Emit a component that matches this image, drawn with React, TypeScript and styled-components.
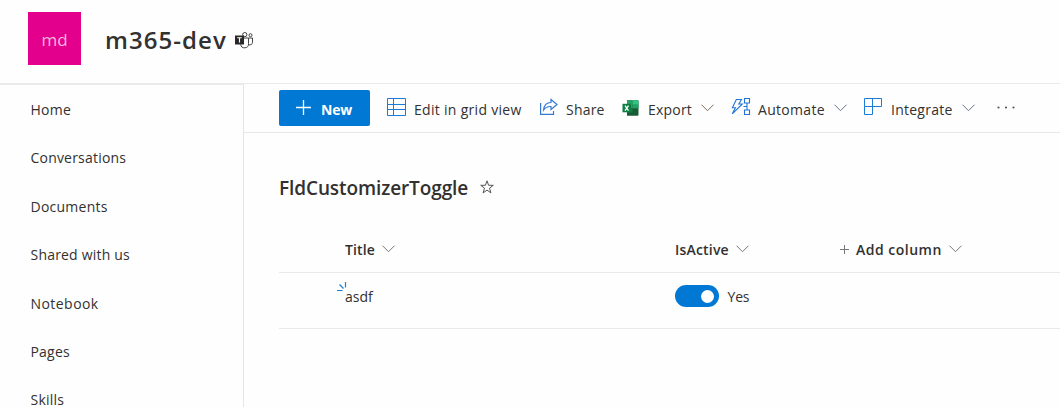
import React from "react";
import styled, { createGlobalStyle } from "styled-components";

const GlobalStyle = createGlobalStyle`
  * { box-sizing: border-box; }
  body { margin: 0; background: #fefefe; color: #323130; overflow: hidden;
    font-family: "Open Sans", "Noto Sans", sans-serif; font-size: 14px; }
  svg { display: block; flex: none; overflow: visible; }
`;

const Page = styled.div`
  height: 407px;
  display: flex;
  flex-direction: column;
  overflow: hidden;
`;
const Header = styled.header`
  height: 83px;
  flex: none;
  display: flex;
  align-items: flex-start;
  padding: 12px 28px;
`;
const Logo = styled.div`
  width: 53px;
  height: 53px;
  background: #e3008c;
  color: #f6b5dc;
  font-size: 17px;
  line-height: 56px;
  text-align: center;
`;
const Text = styled.span<{ $track?: number; $weight?: number; $size?: number }>`
  white-space: nowrap;
  line-height: 20px;
  font-size: ${(p) => p.$size ?? 14}px;
  font-weight: ${(p) => p.$weight ?? 400};
  letter-spacing: ${(p) => p.$track ?? 0}px;
`;
const SiteName = styled.h1`
  margin: 11px 8px 0 24px;
  font-size: 24px;
  line-height: 34px;
  font-weight: 600;
  letter-spacing: 1.05px;
  white-space: nowrap;
`;
const TeamsMark = styled.div`
  margin-top: 20px;
`;
const Body = styled.div`
  flex: 1;
  display: flex;
  min-height: 0;
`;
const SideNav = styled.nav`
  width: 244px;
  flex: none;
  border-top: 2px solid #eaeaea;
  border-right: 1px solid #e6e6e6;
  padding: 0.8px 30px 0 30.5px;
`;
const NavItem = styled.a`
  display: flex;
  align-items: center;
  height: 48.4px;
`;
const Main = styled.main`
  flex: 1;
  min-width: 0;
  border-top: 1px solid #eaeaea;
`;
const Toolbar = styled.div`
  height: 49px;
  border-bottom: 1px solid #e8e8e8;
  display: flex;
  align-items: flex-start;
  padding: 6px 0 0 35px;
`;
const NewButton = styled.button`
  width: 91px;
  height: 36px;
  border: 0;
  border-radius: 2px;
  background: #0078d4;
  color: #fff;
  display: flex;
  align-items: center;
  padding: 3px 0 0 17px;
  gap: 10px;
  font-family: inherit;
  svg { margin-top: -5px; }
`;
const Command = styled.div<{ $width: number; $gap: number; $before: number }>`
  width: ${(p) => p.$width}px;
  margin-left: ${(p) => p.$before}px;
  height: 36px;
  display: flex;
  align-items: center;
  gap: ${(p) => p.$gap}px;
  padding-top: 3px;
  svg { margin-top: -5px; }
  svg:last-child:not(:first-child) { margin: -3px 0 0 auto; }
`;
const ListTitle = styled.div`
  display: flex;
  align-items: center;
  gap: 12px;
  height: 94px;
  padding: 16px 0 0 35px;
  svg { margin-top: -2px; }
`;
const Row = styled.div<{ $height: number }>`
  display: grid;
  grid-template-columns: 330px 165px 1fr;
  align-items: center;
  height: ${(p) => p.$height}px;
  margin-left: 35px;
  padding-left: 66px;
  border-bottom: 1px solid #e9e9e9;
`;
const Cell = styled.div<{ $gap?: number; $shift?: number }>`
  position: relative;
  display: flex;
  align-items: center;
  gap: ${(p) => p.$gap ?? 7}px;
  margin-top: ${(p) => p.$shift ?? 0}px;
  > svg:last-child { margin-top: -2px; }
`;
const NewMark = styled.div`
  position: absolute;
  left: -8px;
  top: -5px;
`;
const Toggle = styled.div`
  width: 44px;
  height: 22px;
  border-radius: 11px;
  background: #0078d4;
  display: flex;
  align-items: center;
  justify-content: flex-end;
  padding: 1px 5px 0 0;
`;
const Knob = styled.div`
  width: 13px;
  height: 13px;
  border-radius: 50%;
  background: #fff;
`;
const ToggleLabel = styled(Text)`
  padding-top: 2px;
`;

const Chevron = ({ color = "#777" }: { color?: string }) => (
  <svg width="13" height="8" viewBox="0 0 13 8" fill="none" stroke={color}>
    <path d="M.5 .7 6.5 6.7 12.5 .7" />
  </svg>
);
const Plus = ({ size, color, stroke = 1 }: { size: number; color: string; stroke?: number }) => (
  <svg width={size} height={size} viewBox={`0 0 ${size} ${size}`} stroke={color} strokeWidth={stroke}>
    <path d={`M0 ${size / 2}H${size}M${size / 2} 0V${size}`} />
  </svg>
);
const TeamsIcon = () => (
  <svg width="19" height="17" viewBox="0 0 19 17" fill="none" stroke="#444">
    <circle cx="9.8" cy="2.6" r="2.1" />
    <circle cx="15.5" cy="3.2" r="1.5" />
    <path d="M9 6h4.5v5.5a3.9 3.9 0 0 1-7.8 .8M13.5 6h4v4.3a2.6 2.6 0 0 1-4 2.2" />
    <path d="M0 3.5h9v9H0z" fill="#292827" stroke="none" />
    <path d="M2.2 5.8h4.6M4.5 5.8v4.8" stroke="#fff" strokeWidth="1.1" />
  </svg>
);
const GridIcon = () => (
  <svg width="19" height="18" viewBox="0 0 19 18" fill="none" stroke="#1c7cd5">
    <path d="M.5 .5h18v17H.5zM.5 6.5h18M.5 11.5h18M6.5 .5v17" />
  </svg>
);
const ShareIcon = () => (
  <svg width="18" height="16" viewBox="0 0 18 16" fill="none" stroke="#3478d4" strokeWidth="1.2">
    <path d="M.6 4v11.4h12.9v-3.4M11 .5l6 5-6 5V7.5C7.5 7.3 5.3 8.6 3.6 11 4 6.5 6.8 3.600 11 3.5z" />
  </svg>
);
const ExcelIcon = () => (
  <svg width="17" height="18" viewBox="0 0 17 18">
    <g transform="translate(.5 2.3)">
      <path d="M4.5 0H15a1 1 0 0 1 1 1v13.5a1 1 0 0 1-1 1H4.5z" fill="#185c37" />
      <path d="M4.5 0H10v8H4.5z" fill="#21a366" />
      <path d="M10 0h5a1 1 0 0 1 1 1v3.5h-6z" fill="#33c481" />
      <path d="M10 4.5h6V8h-6z" fill="#21a366" />
      <path d="M4.5 8H10v4H4.5z" fill="#107c41" />
      <path d="M0 3.5h8.5v8.5H0z" fill="#107c41" />
      <path d="m2.5 5.3 3.5 5M6 5.3l-3.5 5" stroke="#fff" strokeWidth="1.3" />
    </g>
  </svg>
);
const AutomateIcon = () => (
  <svg width="18" height="18" viewBox="0 0 18 18" fill="none" stroke="#2375d5" strokeWidth="1.1">
    <path d="M4.3 1.5h5.2L6.8 6h3.5L.3 15.8 3.4 9.8H.4zM12.5 .5h5v4.5h-5zM12.5 12h5v4.5h-5zM15 5v7M15 8.500h-3.5" />
  </svg>
);
const IntegrateIcon = () => (
  <svg width="18" height="18" viewBox="0 0 18 18" fill="none" stroke="#1c7cd5">
    <path d="M.5 .5h17v8H.5zM.5 8.5v8h8V.5" />
  </svg>
);
const StarIcon = () => (
  <svg width="14" height="14" viewBox="0 0 14 14" fill="none" stroke="#555">
    <path d="m7 .8 1.6 4.5h4.7L9.5 8.2l1.4 4.7L7 10.1l-3.9 2.8 1.4-4.7L.7 5.3h4.7z" />
  </svg>
);
const SparkIcon = () => (
  <svg width="10" height="10" viewBox="0 0 10 10" fill="none" stroke="#1683d8" strokeWidth="1.2">
    <path d="M0 8.5h5.5M2.5 2.5l4 4M8.500 0v5.5" />
  </svg>
);
const MoreIcon = () => (
  <svg width="18" height="3" viewBox="0 0 18 3" fill="#555">
    <circle cx="1.5" cy="1.5" r="1.1" />
    <circle cx="9" cy="1.5" r="1.1" />
    <circle cx="16.5" cy="1.5" r="1.1" />
  </svg>
);

const navItems: [string, number][] = [
  ["Home", 0.3],
  ["Conversations", 0.2],
  ["Documents", 0.25],
  ["Shared with us", 0.2],
  ["Notebook", 0.45],
  ["Pages", 0.2],
  ["Skills", 0.2],
];

export default function App() {
  return (
    <Page>
      <GlobalStyle />
      <Header>
        <Logo>md</Logo>
        <SiteName>m365-dev</SiteName>
        <TeamsMark><TeamsIcon /></TeamsMark>
      </Header>
      <Body>
        <SideNav>
          {navItems.map(([label, track]) => (
            <NavItem key={label}><Text $track={track}>{label}</Text></NavItem>
          ))}
        </SideNav>
        <Main>
          <Toolbar>
            <NewButton><Plus size={15} color="#fff" stroke={1.3} /><Text $weight={700} $track={-0.2}>New</Text></NewButton>
            <Command $before={17} $width={135} $gap={8}><GridIcon /><Text $track={0.3}>Edit in grid view</Text></Command>
            <Command $before={18} $width={65} $gap={8}><ShareIcon /><Text $track={0.2}>Share</Text></Command>
            <Command $before={17} $width={92} $gap={9}><ExcelIcon /><Text $track={0.2}>Export</Text><Chevron color="#7a6a60" /></Command>
            <Command $before={18} $width={115} $gap={8}><AutomateIcon /><Text $track={0.3}>Automate</Text><Chevron color="#66758a" /></Command>
            <Command $before={17} $width={111} $gap={9}><IntegrateIcon /><Text $track={0.25}>Integrate</Text><Chevron color="#66758a" /></Command>
            <Command $before={22} $width={20} $gap={0}><MoreIcon /></Command>
          </Toolbar>
          <ListTitle><Text $size={19} $weight={600} $track={-0.1}>FldCustomizerToggle</Text><StarIcon /></ListTitle>
          <Row $height={46}>
            <Cell><Text $weight={600} $track={0.15}>Title</Text><Chevron /></Cell>
            <Cell><Text $weight={600} $track={0.2}>IsActive</Text><Chevron /></Cell>
            <Cell><Plus size={9} color="#777" /><Text $weight={600} $track={0.5}>Add column</Text><Chevron /></Cell>
          </Row>
          <Row $height={56}>
            <Cell $shift={-8}><NewMark><SparkIcon /></NewMark><Text>asdf</Text></Cell>
            <Cell $shift={-9} $gap={8.5}><Toggle><Knob /></Toggle><ToggleLabel $track={-0.2}>Yes</ToggleLabel></Cell>
          </Row>
        </Main>
      </Body>
    </Page>
  );
}
